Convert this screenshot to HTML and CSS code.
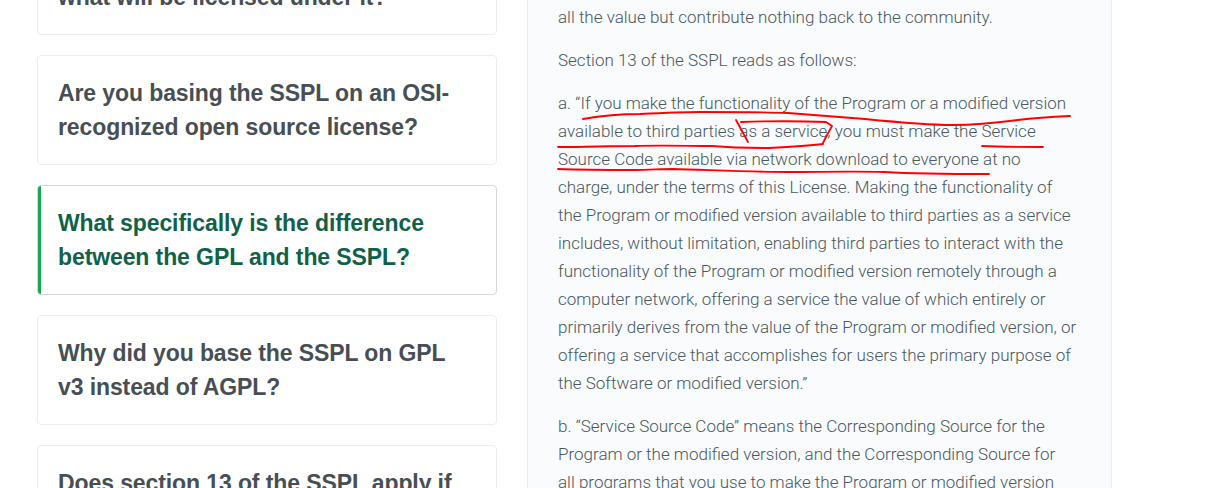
FILE: index.html
```html
<!DOCTYPE html>
<html lang="en">
<head>
<meta charset="utf-8">
<title>SSPL FAQ</title>
<link rel="stylesheet" href="styles.css">
</head>
<body>
<main class="page">
  <nav class="faq-list">
    <a class="faq-card">Who stewards the SSPL, and<br>what will be licensed under it?</a>
    <a class="faq-card">Are you basing the SSPL on an OSI-recognized open source license?</a>
    <a class="faq-card active">What specifically is the difference between the GPL and the SSPL?</a>
    <a class="faq-card">Why did you base the SSPL on GPL v3 instead of AGPL?</a>
    <a class="faq-card">Does section 13 of the SSPL apply if you are running a modified version?</a>
  </nav>
  <article class="answer">
    <p>all the value but contribute nothing back to the community.</p>
    <p>Section 13 of the SSPL reads as follows:</p>
    <p>a. “If you make the functionality of the Program or a modified version available to third parties as a service, you must make the Service Source Code available via network download to everyone at no charge, under the terms of this License. Making the functionality of the Program or modified version available to third parties as a service includes, without limitation, enabling third parties to interact with the functionality of the Program or modified version remotely through a computer network, offering a service the value of which entirely or primarily derives from the value of the Program or modified version, or offering a service that accomplishes for users the primary purpose of the Software or modified version.”</p>
    <p>b. “Service Source Code” means the Corresponding Source for the Program or the modified version, and the Corresponding Source for<br>all programs that you use to make the Program or modified version available as a service, including, without limitation, management software.</p>
  </article>
</main>
<svg class="ink" width="1229" height="488" viewBox="0 0 1229 488" fill="none" stroke="#f00" stroke-width="1.8" stroke-linecap="round" stroke-linejoin="round" aria-hidden="true">
  <path d="M583 119C600 116 620 114 640 114C660 113 680 112 700 112C730 112 760 112 788 113C815 115 840 117 865 119C895 122 925 125 953 125C975 125 995 123 1018 120C1035 118 1050 117 1070 116"/>
  <path d="M736 120L748 142"/>
  <path d="M741 122C770 121 800 121 826 122L832 126L826 137L823 143"/>
  <path d="M558 147C585 147 610 146 635 146C660 145 690 146 712 146C735 148 755 148 769 148C790 147 808 146 823 144"/>
  <path d="M982 146C1000 147 1022 147 1043 147"/>
  <path d="M558 169C585 170 610 170 635 170C650 170 660 169 673 169C710 170 750 172 788 172C820 172 855 171 884 172C920 174 955 174 989 174"/>
</svg>
</body>
</html>
```

FILE: styles.css
```css
* { box-sizing: border-box; }
html, body { margin: 0; height: 488px; overflow: hidden; background: #fff; }
.page {
  display: flex;
  align-items: flex-start;
  gap: 30px;
  padding-left: 37px;
  margin-top: -75px;
}
.faq-list {
  display: flex;
  flex-direction: column;
  gap: 20px;
  width: 460px;
  flex: none;
}
.faq-card {
  display: block;
  height: 110px;
  padding: 20px;
  background: #fff;
  border: 1px solid #ebeef0;
  border-radius: 4px;
  font-family: "Liberation Sans", Arial, sans-serif;
  font-size: 23px;
  font-weight: 700;
  letter-spacing: -0.1px;
  line-height: 34px;
  color: #474e54;
}
.faq-card.active {
  position: relative;
  overflow: hidden;
  border-color: #d5d9dc;
  color: #116149;
}
.faq-card.active::before {
  content: "";
  position: absolute;
  left: -1px;
  top: -1px;
  bottom: -1px;
  width: 4px;
  background: #13aa52;
}
.answer {
  width: 585px;
  flex: none;
  padding: 78px 33px 0 30px;
  background: #f9fbfd;
  border: 1px solid #e7eef1;
  border-width: 0 1px;
  height: 640px;
  font-family: Roboto, "Liberation Sans", sans-serif;
  font-size: 17px;
  font-weight: 300;
  line-height: 28px;
  color: #4a5860;
}
.answer p { margin: 0 0 15px; }
.ink { position: absolute; left: 0; top: 0; pointer-events: none; }
```
